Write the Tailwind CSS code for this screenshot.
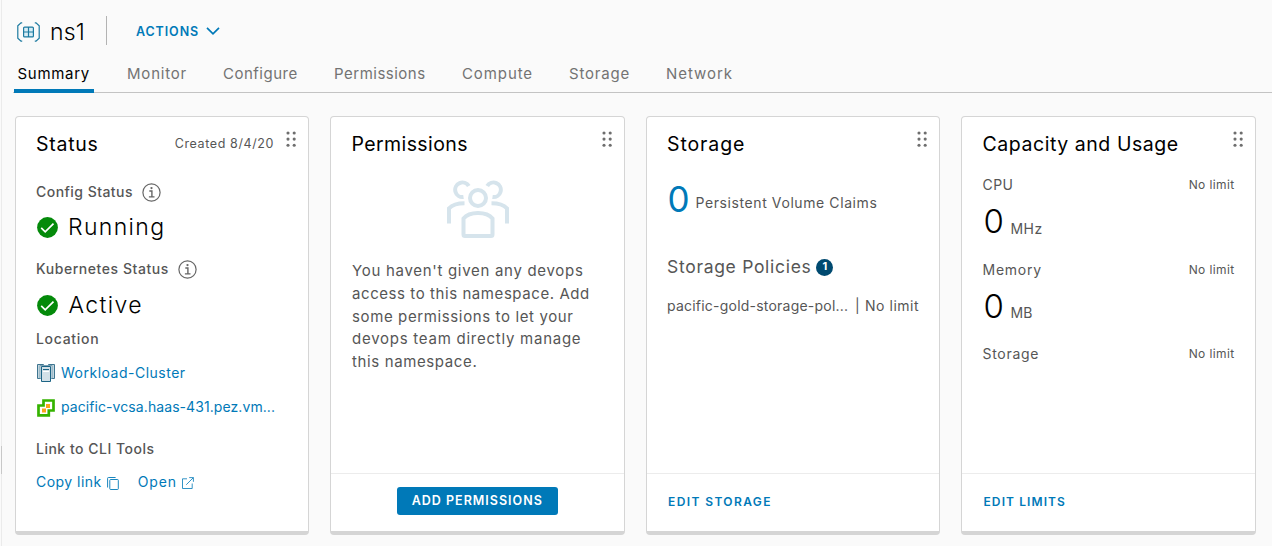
<!DOCTYPE html>
<html lang="en">
<head>
<meta charset="utf-8">
<title>ns1 - Summary</title>
<script src="https://cdn.jsdelivr.net/npm/@tailwindcss/browser@4"></script>
</head>
<body class="relative h-[546px] overflow-hidden bg-[#fafafa] font-['Inter',sans-serif] text-sm text-[#565656] whitespace-nowrap">
<svg width="0" height="0" class="absolute">
  <defs>
    <symbol id="grip" viewBox="0 0 12 16"><g fill="#6e6e6e"><circle cx="2" cy="2" r="1.55"/><circle cx="8.2" cy="2" r="1.55"/><circle cx="2" cy="8.1" r="1.55"/><circle cx="8.2" cy="8.1" r="1.55"/><circle cx="2" cy="14.2" r="1.55"/><circle cx="8.2" cy="14.2" r="1.55"/></g></symbol>
    <symbol id="ok" viewBox="0 0 21 21"><circle cx="10.5" cy="10.5" r="10.4" fill="#048a0a"/><path d="M4.2 10.9l4 4 8.3-8.3" fill="none" stroke="#fff" stroke-width="1.7"/></symbol>
    <symbol id="info" viewBox="0 0 19 19"><g fill="none" stroke="#666" stroke-width="1.2"><circle cx="9.5" cy="9.5" r="8.6"/><path d="M7.3 8h2.6v5.7M6.9 13.9h5.6" stroke-width="1.4"/></g><circle cx="9.5" cy="5.1" r="1.15" fill="#666"/></symbol>
  </defs>
</svg>
<div class="absolute left-px top-0 h-full w-px bg-[#ebebeb]"></div>
<div class="absolute left-px top-[446px] h-7 w-px bg-[#c8c8c8]"></div>

<header class="flex h-[63px] items-center pl-[17px]">
  <svg class="h-5 w-[23px]" viewBox="0 0 23 20" fill="none" stroke="#1c7aa0" stroke-width="1.2">
    <path d="M5.2.8H4L.8 3.8v12.4l3.2 3h1.2M17.8.8H19l3.2 3v12.4l-3.2 3h-1.2"/>
    <rect x="6.6" y="5.1" width="9.8" height="9.8" rx="1" fill="#d9edf5"/><path d="M11.5 5v10M6.6 10h9.8"/>
  </svg>
  <h1 class="ml-[10px] w-[56px] text-[23px] leading-7 font-light tracking-[0.2px] text-black">ns1</h1>
  <div class="-mt-0.5 h-[29px] w-px bg-[#b3b3b3]"></div>
  <button class="ml-[29px] flex items-center text-[12.5px] font-semibold tracking-[0.9px] text-[#0079b8]">ACTIONS
    <svg class="ml-[7px] h-2 w-[14px] -mt-0.5" viewBox="0 0 14 8" fill="none" stroke="#0079b8" stroke-width="1.7"><path d="M1 .8l6 6 6-6"/></svg>
  </button>
</header>

<nav class="ml-[13px] flex h-[30px] border-b border-[#c3c3c3] pl-[1px] text-[15px] leading-[22px] text-[#737373]">
  <a class="mr-[33px] h-[30px] w-20 border-b-[4px] border-[#0079b8] pl-[3.5px] tracking-[0.7px] text-black">Summary</a>
  <a class="w-24 tracking-[0.8px]">Monitor</a>
  <a class="w-[111px] tracking-[0.5px]">Configure</a>
  <a class="w-32 tracking-[0.5px]">Permissions</a>
  <a class="w-[107px] tracking-[0.9px]">Compute</a>
  <a class="w-[97px] tracking-[0.8px]">Storage</a>
  <a class="tracking-[0.95px]">Network</a>
</nav>

<main class="mt-[23px] grid grid-cols-[repeat(4,294.5px)] gap-[21px] pl-[14.5px]">
  <section class="flex h-[419px] flex-col rounded-[4px] border border-b-4 border-[#d5d5d5] bg-white pl-[20.5px]">
    <div class="flex h-[55px] items-center pt-px text-[19.5px] tracking-[0.73px] text-black">Status
      <span class="ml-auto -mt-[2px] text-[12.5px] tracking-[0.6px] text-[#565656]">Created 8/4/20</span>
      <svg class="mr-[10px] -mt-[12px] ml-[12px] h-4 w-3"><use href="#grip"/></svg>
    </div>
    <div class="flex h-10 items-center font-medium tracking-[0.46px]">Config Status<svg class="ml-[9px] h-[19px] w-[19px]"><use href="#info"/></svg></div>
    <div class="flex h-[30px] items-center text-[23px] font-light tracking-[1.35px] text-black"><svg class="ml-[1px] mr-[10px] h-[21px] w-[21px]"><use href="#ok"/></svg>Running</div>
    <div class="mt-2 flex h-[38px] items-center font-medium tracking-[0.56px]">Kubernetes Status<svg class="ml-[9px] h-[19px] w-[19px]"><use href="#info"/></svg></div>
    <div class="flex h-[33px] items-center pt-px text-[23px] font-light tracking-[1.4px] text-black"><svg class="ml-[1px] mr-[10.5px] h-[21px] w-[21px]"><use href="#ok"/></svg>Active</div>
    <div class="flex h-9 items-center font-medium tracking-[0.7px]">Location</div>
    <div class="flex h-8 items-center tracking-[0.5px] text-[#0079b8]">
      <svg class="ml-[0.5px] mr-[6.5px] h-[18px] w-[18px]" viewBox="0 0 18 18" fill="#c2d5de" stroke="#3e7590" stroke-width="1"><path d="M.5.5h6v14h-6zM11.5.5h6v14h-6z"/><path d="M3 1.500h12v13H3z" fill="#eef4f7" stroke="#7ba0b3"/><path d="M4.500 2.500h9v15h-9z" fill="#d3e0e7" stroke="#1c6485"/><path d="M6 5.500h6" stroke="#1c6485"/><path d="M6 7.500h6" stroke="#fff"/></svg>Workload-Cluster</div>
    <div class="flex h-9 items-center tracking-[0.08px] text-[#0079b8]">
      <svg class="ml-[0.5px] mr-[6.5px] mt-[2px] h-[18px] w-[18px]" viewBox="0 0 18 18"><path d="M6.5 1.500h10v10h-4.700v4.800H1.500V6.500h5z" fill="#fff" stroke="#35b300" stroke-width="2.700"/><path d="M9 5h4v4H9zM5 9.500h4v4H5z" fill="#f9a51a"/></svg>pacific-vcsa.haas-431.pez.vm...</div>
    <div class="mt-1.5 flex h-9 items-center font-medium tracking-[0.5px]">Link to CLI Tools</div>
    <div class="flex h-[30px] items-center text-[#0079b8]"><a class="tracking-[0.47px]">Copy link</a>
      <svg class="ml-[5px] mt-[2px] h-[13px] w-3" viewBox="0 0 12 13" fill="none" stroke="#0079b8" stroke-width=".9"><rect x="2.8" y="2.5" width="8.5" height="10" rx=".8"/><path d="M.6 10.5V1.3q0-.8.8-.8h7.2"/></svg>
      <a class="ml-[19px] tracking-[0.9px]">Open</a>
      <svg class="ml-[5px] mt-[2px] h-3 w-3" viewBox="0 0 12 12" fill="none" stroke="#0079b8" stroke-width=".8"><path d="M5 1.8H.5v9.7h9.7V6.5M4.2 7.8L11.3.7M7.2.6h4.2v4.2"/></svg>
    </div>
  </section>

  <section class="flex h-[419px] flex-col rounded-[4px] border border-b-4 border-[#d5d5d5] bg-white">
    <div class="flex h-[55px] items-center pt-px pl-[20.5px] text-[19.5px] tracking-[0.4px] text-black">Permissions
      <svg class="mr-[10px] -mt-[12px] ml-auto h-4 w-3"><use href="#grip"/></svg>
    </div>
    <svg class="ml-[115px] mt-2 h-[60px] w-16" viewBox="0 0 64 60" fill="none" stroke="#d6e4ec" stroke-width="4">
      <circle cx="32" cy="18" r="8"/>
      <path d="M22.8 6.1A7.3 7.3 0 1 0 17.5 17M41.2 6.1A7.3 7.3 0 1 1 46.5 17"/>
      <path d="M18.5 23.3C11 23.3 6 25.2 3 28.3V43.5M45.5 23.3C53 23.3 58 25.2 61 28.3V43.5"/>
      <path d="M17.5 54.5V38.5C20.5 34.8 25.5 33 32 33s11.5 1.8 14.5 5.5v16q0 1.5-1.5 1.5H19q-1.5 0-1.5-1.5z"/>
    </svg>
    <p class="mt-[20px] pl-[21px] text-[15px] leading-[22.8px] tracking-[0.62px]"><span class="tracking-[0.7px]">You haven't given any devops</span><br><span class="tracking-[0.57px]">access to this namespace. Add</span><br>some permissions to let your<br><span class="tracking-[0.75px]">devops team directly manage</span><br>this namespace.</p>
    <div class="mt-auto flex h-[58px] items-center justify-center border-t border-[#ececec]">
      <button class="-mt-[3px] h-7 w-[161px] rounded-[3px] bg-[#0079b8] text-[12.5px] font-semibold tracking-[1px] text-white">ADD PERMISSIONS</button>
    </div>
  </section>

  <section class="flex h-[419px] flex-col rounded-[4px] border border-b-4 border-[#d5d5d5] bg-white">
    <div class="flex h-[55px] items-center pt-px pl-[20.5px] text-[19.5px] tracking-[0.89px] text-black">Storage
      <svg class="mr-[10px] -mt-[12px] ml-auto h-4 w-3"><use href="#grip"/></svg>
    </div>
    <div class="flex h-[54px] items-center pl-[21px]"><span class="w-[28px] text-[35px] text-[#0079b8]">0</span><span class="mt-2 tracking-[0.59px]">Persistent Volume Claims</span></div>
    <div class="mt-[20px] flex h-10 items-center pl-[20.5px] text-[17.5px] tracking-[0.7px]">Storage Policies<span class="ml-[5px] mt-[2px] flex h-[17px] w-[17px] items-center justify-center rounded-full bg-[#004a70] text-[11px] font-bold tracking-normal text-white">1</span></div>
    <div class="mt-[2px] flex h-9 items-center pl-[20.5px]"><span class="w-[188px] tracking-[0.22px]">pacific-gold-storage-pol...</span><span class="w-[10px]">|</span><span class="tracking-[0.53px]">No limit</span></div>
    <div class="mt-auto flex h-[58px] items-center border-t border-[#ececec] pb-px pl-[21.5px] text-xs font-semibold tracking-[1.4px] text-[#0079b8]">EDIT STORAGE</div>
  </section>

  <section class="flex h-[419px] flex-col rounded-[4px] border border-b-4 border-[#d5d5d5] bg-white">
    <div class="flex h-[55px] items-center pt-px pl-[20.5px] text-[19.5px] tracking-[0.55px] text-black">Capacity and Usage
      <svg class="mr-[10px] -mt-[12px] ml-auto h-4 w-3"><use href="#grip"/></svg>
    </div>
    <div class="flex h-[25px] items-center justify-between pl-[20.5px] pr-5"><span class="tracking-[0.42px]">CPU</span><span class="text-xs tracking-[0.38px]">No limit</span></div>
    <div class="flex h-[50px] items-center pl-[21.5px]"><span class="w-[27px] text-[33px] font-light text-black">0</span><span class="mt-[13px] tracking-[0.47px]">MHz</span></div>
    <div class="mt-[9.6px] flex h-[26px] items-center justify-between pl-[20.5px] pr-5"><span class="tracking-[0.75px]">Memory</span><span class="text-xs tracking-[0.38px]">No limit</span></div>
    <div class="-mt-px flex h-[50px] items-center pl-[21.5px]"><span class="w-[27px] text-[33px] font-light text-black">0</span><span class="mt-[13px] tracking-[0.1px]">MB</span></div>
    <div class="mt-[9.6px] flex h-[25px] items-center justify-between pl-[20.5px] pr-5"><span class="tracking-[0.7px]">Storage</span><span class="text-xs tracking-[0.38px]">No limit</span></div>
    <div class="mt-auto flex h-[58px] items-center border-t border-[#ececec] pb-px pl-[21.5px] text-xs font-semibold tracking-[1.1px] text-[#0079b8]">EDIT LIMITS</div>
  </section>
</main>
</body>
</html>
